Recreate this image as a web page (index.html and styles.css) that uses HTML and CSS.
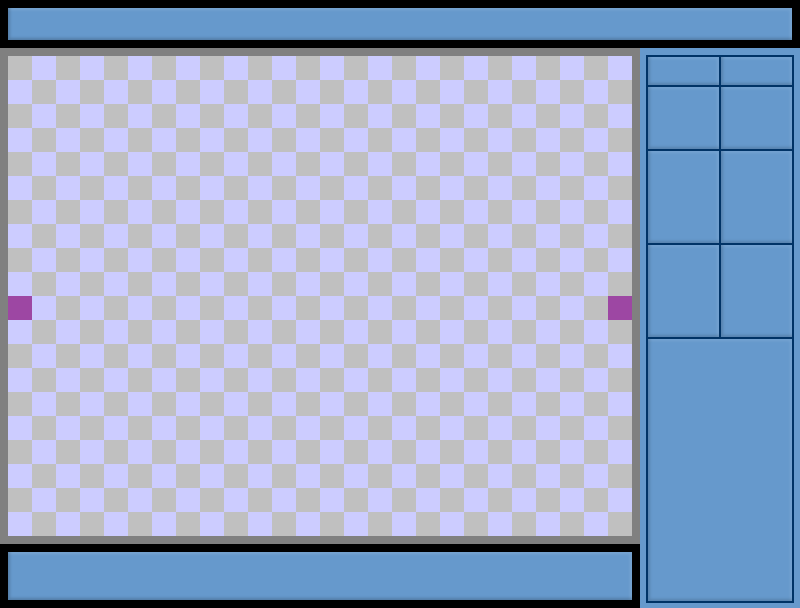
FILE: index.html
```html
<!DOCTYPE html>
<html>
<head>
<meta charset="utf-8">
<link rel="stylesheet" href="styles.css">
</head>
<body>
<div class="app">
  <header class="top"><div class="bar"></div></header>
  <main class="left">
    <section class="frame">
      <div class="board">
        <div class="piece p-left"></div>
        <div class="piece p-right"></div>
      </div>
    </section>
    <footer class="bottom"><div class="bar"></div></footer>
  </main>
  <aside class="side">
    <div class="table">
      <div class="cell"></div><div class="cell"></div>
      <div class="cell"></div><div class="cell"></div>
      <div class="cell"></div><div class="cell"></div>
      <div class="cell"></div><div class="cell"></div>
      <div class="cell wide"></div>
    </div>
  </aside>
</div>
</body>
</html>
```
FILE: styles.css
```css
html, body {
  margin: 0;
  padding: 0;
  background: #000;
  font-family: "Liberation Sans", Arial, sans-serif;
}
.app {
  width: 800px;
  height: 608px;
  display: grid;
  grid-template-columns: 640px 160px;
  grid-template-rows: 48px 560px;
}
.top {
  grid-column: 1 / 3;
  padding: 8px 8px 8px 8px;
  box-sizing: border-box;
}
.bar {
  background: #6699cc;
  height: 100%;
  box-shadow: inset 2px -2px 3px rgba(0, 0, 0, 0.18), inset -2px 2px 3px rgba(255, 255, 255, 0.12);
}
.left {
  display: flex;
  flex-direction: column;
}
.frame {
  background: #808080;
  padding: 8px;
}
.board {
  width: 624px;
  height: 480px;
  display: grid;
  grid-template-columns: repeat(26, 24px);
  grid-template-rows: repeat(20, 24px);
  background: repeating-conic-gradient(#ccccff 0 25%, #c0c0c0 0 50%) 0 0 / 48px 48px;
}
.piece {
  background: #9d47a3;
  grid-row: 11;
}
.p-left { grid-column: 1; }
.p-right { grid-column: 26; }
.bottom {
  padding: 8px;
  height: 64px;
  box-sizing: border-box;
}
.side {
  background: #6699cc;
  padding: 7px 6px 5px 6px;
}
.table {
  display: grid;
  grid-template-columns: 71px 71px;
  grid-template-rows: 28px 62px 92px 92px 262px;
  gap: 2px;
  padding: 2px;
  background: #003366;
}
.cell {
  background: #6699cc;
  box-shadow: inset 2px -2px 3px rgba(0, 0, 0, 0.15), inset -2px 2px 3px rgba(255, 255, 255, 0.1);
}
.cell.wide {
  grid-column: 1 / 3;
}
```
